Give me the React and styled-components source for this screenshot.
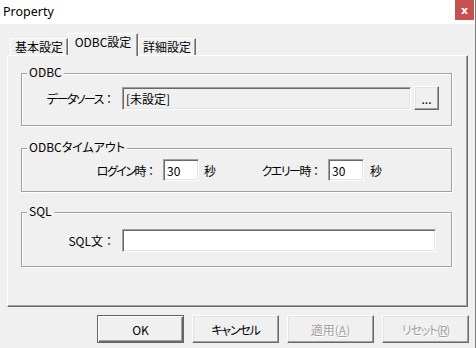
import React from 'react';
import styled, { createGlobalStyle } from 'styled-components';

const GlobalStyle = createGlobalStyle`
  html, body {
    margin: 0;
    padding: 0;
    background: #f0f0f0;
  }
  body {
    font-family: "Noto Sans CJK JP", "Noto Sans", sans-serif;
    font-size: 12px;
    color: #000;
    font-feature-settings: "palt";
  }
`;

const Window = styled.div`
  width: 476px;
  height: 348px;
  box-sizing: border-box;
  border-right: 1px solid #7a7a7a;
  background: #f0f0f0;
  display: flex;
  flex-direction: column;
  overflow: hidden;
`;

const TitleBar = styled.div`
  height: 24px;
  flex-shrink: 0;
  background: #fff;
  display: flex;
  justify-content: space-between;
  align-items: flex-start;
`;

const Title = styled.div`
  padding: 3px 0 0 3px;
  font-family: "Noto Sans", sans-serif;
  font-size: 12.5px;
  line-height: 17px;
  color: #000;
`;

const CloseButton = styled.div`
  width: 19px;
  height: 20px;
  margin-right: 1px;
  background: #c75050;
  color: #fff;
  display: flex;
  align-items: center;
  justify-content: center;
  font: bold 11px "DejaVu Sans", sans-serif;
  line-height: 1;
`;

const Body = styled.div`
  padding: 9px 0 0 7px;
  display: flex;
  flex-direction: column;
`;

const TabRow = styled.div`
  height: 23px;
  margin-bottom: -1px;
  padding-left: 3px;
  display: flex;
  align-items: flex-end;
  position: relative;
  z-index: 1;
`;

const Tab = styled.div`
  box-sizing: border-box;
  width: ${p => p.$w}px;
  height: ${p => (p.$active ? 23 : 17)}px;
  margin-bottom: ${p => (p.$active ? 0 : 1)}px;
  background: #f0f0f0;
  border-top: 1px solid #fff;
  border-left: 1px solid #fff;
  border-right: 1px solid #696969;
  box-shadow: inset -1px 0 0 #a0a0a0;
  text-align: center;
  line-height: ${p => (p.$active ? 16 : 15)}px;
`;

const Panel = styled.div`
  box-sizing: border-box;
  width: 461px;
  height: 252px;
  border-style: solid;
  border-width: 1px;
  border-color: #fff #696969 #696969 #fff;
  box-shadow: inset -1px -1px 0 #a0a0a0;
  padding: 0 0 0 13px;
  display: flex;
  flex-direction: column;
`;

const Group = styled.div`
  position: relative;
  box-sizing: border-box;
  width: 431px;
  height: ${p => p.$h}px;
  margin-top: ${p => p.$top}px;
  padding-top: ${p => p.$pad}px;
  border: 1px solid #a0a0a0;
  box-shadow: inset 1px 1px 0 #fff, 1px 1px 0 #fff;
`;

const Legend = styled.div`
  position: absolute;
  top: -10px;
  left: 5px;
  padding: 0 2px;
  background: #f0f0f0;
  line-height: 16px;
`;

const Row = styled.div`
  display: flex;
  align-items: center;
  padding-left: ${p => p.$indent || 0}px;
`;

const Label = styled.span`
  width: ${p => p.$w}px;
  flex-shrink: 0;
  text-align: right;
  white-space: nowrap;
  letter-spacing: ${p => (p.$tight ? '-1.5px' : '0')};
`;

const Colon = styled.span`
  font-feature-settings: normal;
  letter-spacing: 0;
`;

const Unit = styled.span`
  margin-left: ${p => p.$gap}px;
  white-space: nowrap;
`;

const Input = styled.div`
  box-sizing: border-box;
  width: ${p => p.$w}px;
  height: ${p => p.$h}px;
  margin-left: ${p => p.$gap}px;
  padding-left: 3px;
  background: ${p => (p.$readOnly ? '#f0f0f0' : '#fff')};
  border-style: solid;
  border-width: 1px;
  border-color: #a0a0a0 #fff #fff #a0a0a0;
  box-shadow: inset 1px 1px 0 #696969, inset -1px -1px 0 #e3e3e3;
  display: flex;
  align-items: center;
  white-space: nowrap;
`;

const Button = styled.button`
  box-sizing: border-box;
  width: ${p => p.$w || 87}px;
  height: ${p => p.$h || 28}px;
  margin-left: ${p => p.$gap || 0}px;
  padding: 0;
  background: #f0f0f0;
  font-family: "Noto Sans CJK JP", "Noto Sans", sans-serif;
  font-size: 12px;
  font-feature-settings: "palt";
  letter-spacing: ${p => (p.$tight ? '-1.2px' : '0')};
  color: ${p => (p.disabled ? '#a0a0a0' : '#000')};
  text-shadow: ${p => (p.disabled ? '1px 1px 0 #fff' : 'none')};
  border-style: solid;
  border-width: 1px;
  border-color: ${p => (p.$default ? '#646464' : '#fff #696969 #696969 #fff')};
  box-shadow: ${p =>
    p.$default
      ? 'inset 1px 1px 0 #fff, inset -1px -1px 0 #696969, inset -2px -2px 0 #a0a0a0'
      : 'inset -1px -1px 0 #a0a0a0, inset 1px 1px 0 #e3e3e3'};
  u {
    text-decoration: underline;
  }
`;

const ButtonBar = styled.div`
  margin-top: 8px;
  padding-right: 6px;
  display: flex;
  justify-content: flex-end;
`;

export default function App() {
  return (
    <>
      <GlobalStyle />
      <Window>
        <TitleBar>
          <Title>Property</Title>
          <CloseButton>x</CloseButton>
        </TitleBar>
        <Body>
          <TabRow>
            <Tab $w={58}>基本設定</Tab>
            <Tab $w={70} $active>ODBC設定</Tab>
            <Tab $w={58}>詳細設定</Tab>
          </TabRow>
          <Panel>
            <Group $top={17} $h={53} $pad={12}>
              <Legend>ODBC</Legend>
              <Row>
                <Label $w={93} $tight>データソース<Colon>：</Colon></Label>
                <Input $w={289} $h={23} $gap={7} $readOnly>[未設定]</Input>
                <Button $w={25} $h={24} $gap={3}>...</Button>
              </Row>
            </Group>
            <Group $top={22} $h={44} $pad={10}>
              <Legend>ODBCタイムアウト</Legend>
              <Row $indent={70}>
                <Label $w={65} $tight>ログイン時<Colon>：</Colon></Label>
                <Input $w={36} $h={22} $gap={6}>30</Input>
                <Unit $gap={5}>秒</Unit>
                <Label $w={106} $tight>クエリー時<Colon>：</Colon></Label>
                <Input $w={36} $h={22} $gap={6}>30</Input>
                <Unit $gap={6}>秒</Unit>
              </Row>
            </Group>
            <Group $top={20} $h={55} $pad={16}>
              <Legend>SQL</Legend>
              <Row>
                <Label $w={93}>SQL文<Colon>：</Colon></Label>
                <Input $w={314} $h={23} $gap={7} />
              </Row>
            </Group>
          </Panel>
          <ButtonBar>
            <Button $default>OK</Button>
            <Button $gap={8} $tight>キャンセル</Button>
            <Button $gap={8} disabled>適用(<u>A</u>)</Button>
            <Button $gap={8} disabled $tight>リセット(<u>R</u>)</Button>
          </ButtonBar>
        </Body>
      </Window>
    </>
  );
}
